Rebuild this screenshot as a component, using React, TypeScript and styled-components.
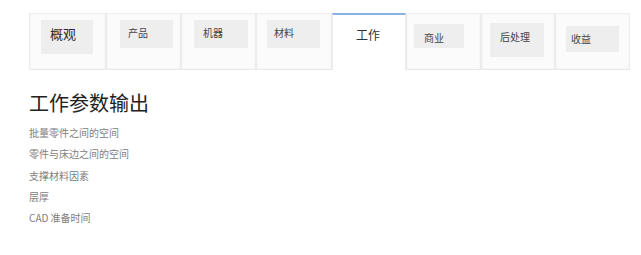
import React from "react";
import styled, { createGlobalStyle } from "styled-components";

const Global = createGlobalStyle`
  html, body { margin: 0; padding: 0; background: #ffffff; }
  body { font-family: "Noto Sans CJK SC", "Liberation Sans", sans-serif; }
`;

const Page = styled.div`
  width: 641px;
  height: 255px;
  padding: 13px 0 0 29px;
  box-sizing: border-box;
  overflow: hidden;
`;

const TabStrip = styled.div`
  display: flex;
  align-items: flex-start;
`;

const Tab = styled.div<{ $w: number; $active?: boolean }>`
  box-sizing: border-box;
  width: ${(p) => p.$w}px;
  height: 57px;
  display: flex;
  flex-direction: column;
  align-items: flex-start;
  background: ${(p) => (p.$active ? "#ffffff" : "#fbfbfb")};
  border: 1px solid #ececec;
  border-top: ${(p) => (p.$active ? "2px solid #8cb1e0" : "1px solid #efefef")};
  border-bottom: ${(p) => (p.$active ? "none" : "1px solid #e9e9e9")};
  box-shadow: ${(p) => (p.$active ? "none" : "inset 0 0 0 1px #f7f7f7")};
`;

const Box = styled.div<{ $l: number; $t: number; $w: number; $h: number; $pl: number; $pt: number; $big?: boolean }>`
  box-sizing: border-box;
  margin-left: ${(p) => p.$l}px;
  margin-top: ${(p) => p.$t}px;
  width: ${(p) => p.$w}px;
  height: ${(p) => p.$h}px;
  padding-left: ${(p) => p.$pl}px;
  padding-top: ${(p) => p.$pt}px;
  background: #eeeeee;
  color: ${(p) => (p.$big ? "#2a2a2a" : "#444444")};
  font-size: ${(p) => (p.$big ? 13 : 10)}px;
  line-height: ${(p) => (p.$big ? 15 : 12)}px;
  font-weight: 400;
  white-space: nowrap;
`;

const ActiveLabel = styled.div`
  margin-left: 23px;
  margin-top: 13px;
  font-size: 12px;
  line-height: 14px;
  color: #333333;
`;

const Heading = styled.h1`
  margin: 21px 0 0 0;
  font-size: 20px;
  line-height: 24px;
  font-weight: 400;
  color: #222222;
`;

const List = styled.ul`
  list-style: none;
  margin: 7px 0 0 0;
  padding: 0;
`;

const Item = styled.li`
  font-size: 10px;
  line-height: 21.3px;
  color: #808080;
`;

type TabDef = {
  label: string;
  w: number;
  active?: boolean;
  big?: boolean;
  box?: { l: number; t: number; w: number; h: number; pl: number; pt: number };
};

const tabs: TabDef[] = [
  { label: "概观", w: 77, big: true, box: { l: 11, t: 6, w: 52, h: 34, pl: 9, pt: 6 } },
  { label: "产品", w: 75, box: { l: 13, t: 6, w: 53, h: 28, pl: 8, pt: 7 } },
  { label: "机器", w: 75, box: { l: 12, t: 6, w: 54, h: 28, pl: 9, pt: 7 } },
  { label: "材料", w: 76, box: { l: 10, t: 6, w: 53, h: 28, pl: 7, pt: 7 } },
  { label: "工作", w: 74, active: true },
  { label: "商业", w: 75, box: { l: 7, t: 10, w: 50, h: 24, pl: 10, pt: 8 } },
  { label: "后处理", w: 74, box: { l: 8, t: 9, w: 54, h: 34, pl: 10, pt: 8 } },
  { label: "收益", w: 75, box: { l: 10, t: 12, w: 53, h: 26, pl: 5, pt: 7 } },
];

const items = [
  "批量零件之间的空间",
  "零件与床边之间的空间",
  "支撑材料因素",
  "层厚",
  "CAD 准备时间",
];

export default function App() {
  return (
    <>
      <Global />
      <Page>
        <TabStrip>
          {tabs.map((t) => (
            <Tab key={t.label} $w={t.w} $active={t.active}>
              {t.active || !t.box ? (
                <ActiveLabel>{t.label}</ActiveLabel>
              ) : (
                <Box
                  $l={t.box.l}
                  $t={t.box.t}
                  $w={t.box.w}
                  $h={t.box.h}
                  $pl={t.box.pl}
                  $pt={t.box.pt}
                  $big={t.big}
                >
                  {t.label}
                </Box>
              )}
            </Tab>
          ))}
        </TabStrip>
        <Heading>工作参数输出</Heading>
        <List>
          {items.map((i) => (
            <Item key={i}>{i}</Item>
          ))}
        </List>
      </Page>
    </>
  );
}
